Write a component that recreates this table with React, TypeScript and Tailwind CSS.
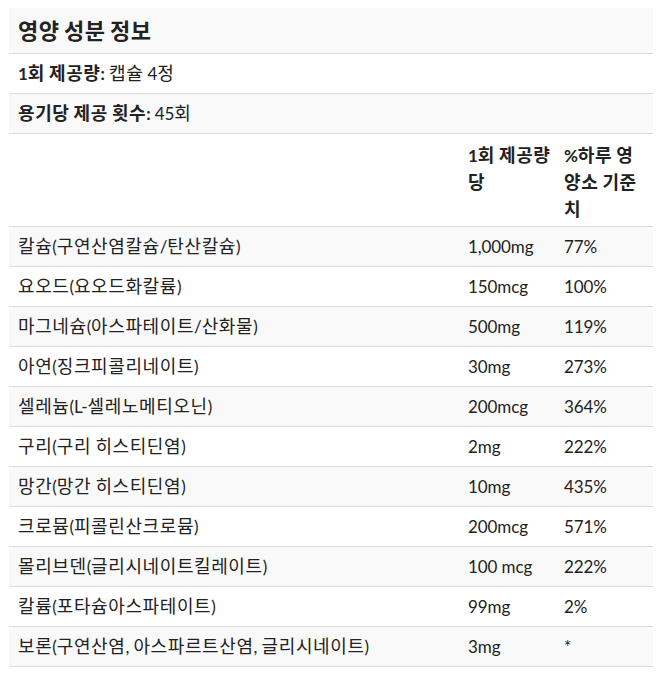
import React from "react";

const rows: [string, string, string][] = [
  ["칼슘(구연산염칼슘/탄산칼슘)", "1,000mg", "77%"],
  ["요오드(요오드화칼륨)", "150mcg", "100%"],
  ["마그네슘(아스파테이트/산화물)", "500mg", "119%"],
  ["아연(징크피콜리네이트)", "30mg", "273%"],
  ["셀레늄(L-셀레노메티오닌)", "200mcg", "364%"],
  ["구리(구리 히스티딘염)", "2mg", "222%"],
  ["망간(망간 히스티딘염)", "10mg", "435%"],
  ["크로뮴(피콜린산크로뮴)", "200mcg", "571%"],
  ["몰리브덴(글리시네이트킬레이트)", "100 mcg", "222%"],
  ["칼륨(포타슘아스파테이트)", "99mg", "2%"],
  ["보론(구연산염, 아스파르트산염, 글리시네이트)", "3mg", "*"],
];

function T({ text, big, perChar }: { text: string; big?: boolean; perChar?: boolean }) {
  const re = perChar ? /([\uAC00-\uD7A3])/ : /([\uAC00-\uD7A3]+)/;
  const parts = text.split(re).filter((p) => p.length > 0);
  return (
    <>
      {parts.map((p, i) =>
        /[\uAC00-\uD7A3]/.test(p) ? (
          <span
            key={i}
            className={big ? "text-[22px] tracking-[0.4px]" : "text-[18px] tracking-[0.6px]"}
          >
            {p}
          </span>
        ) : (
          <span key={i}>{p}</span>
        )
      )}
    </>
  );
}

export default function App() {
  return (
    <div
      className="pt-[8px] pl-[9px] text-[17px] tracking-[-0.1px] text-[#222]"
      style={{ fontFamily: "Lato, 'Noto Sans CJK KR', sans-serif" }}
    >
      <div className="w-[644px]">
        <div className="h-[46px] bg-[#f9f9f9] border-b border-[#dddddd] flex items-center px-[9px]">
          <span className="text-[20px] font-bold whitespace-pre">
            <T text="영양 성분 정보" big />
          </span>
        </div>
        <div className="h-[40px] border-b border-[#dddddd] flex items-center px-[9px] whitespace-pre">
          <span className="font-bold">
            <T text="1회 제공량:" />
          </span>
          <span>
            <T text=" 캡슐 4정" />
          </span>
        </div>
        <div className="h-[40px] bg-[#f9f9f9] border-b border-[#dddddd] flex items-center px-[9px] whitespace-pre">
          <span className="font-bold">
            <T text="용기당 제공 횟수:" />
          </span>
          <span>
            <T text=" 45회" />
          </span>
        </div>
        <div className="h-[93px] border-b border-[#dddddd] grid grid-cols-[450px_96px_98px] font-bold leading-[26px]">
          <div className="px-[9px] pt-[8px]"></div>
          <div className="pl-[9px] pr-[3px] pt-[8px]">
            <T text="1회 제공량 당" perChar />
          </div>
          <div className="pl-[9px] pr-[9px] pt-[8px]">
            <T text="%하루 영양소 기준치" perChar />
          </div>
        </div>
        {rows.map((r, i) => (
          <div
            key={i}
            className={`h-[40px] border-b border-[#dddddd] grid grid-cols-[450px_96px_98px] items-center ${
              i % 2 === 0 ? "bg-[#f9f9f9]" : "bg-white"
            }`}
          >
            <div className="px-[9px] whitespace-pre">
              <T text={r[0]} />
            </div>
            <div className="px-[9px] whitespace-pre">{r[1]}</div>
            <div className="px-[9px]">{r[2]}</div>
          </div>
        ))}
      </div>
    </div>
  );
}
